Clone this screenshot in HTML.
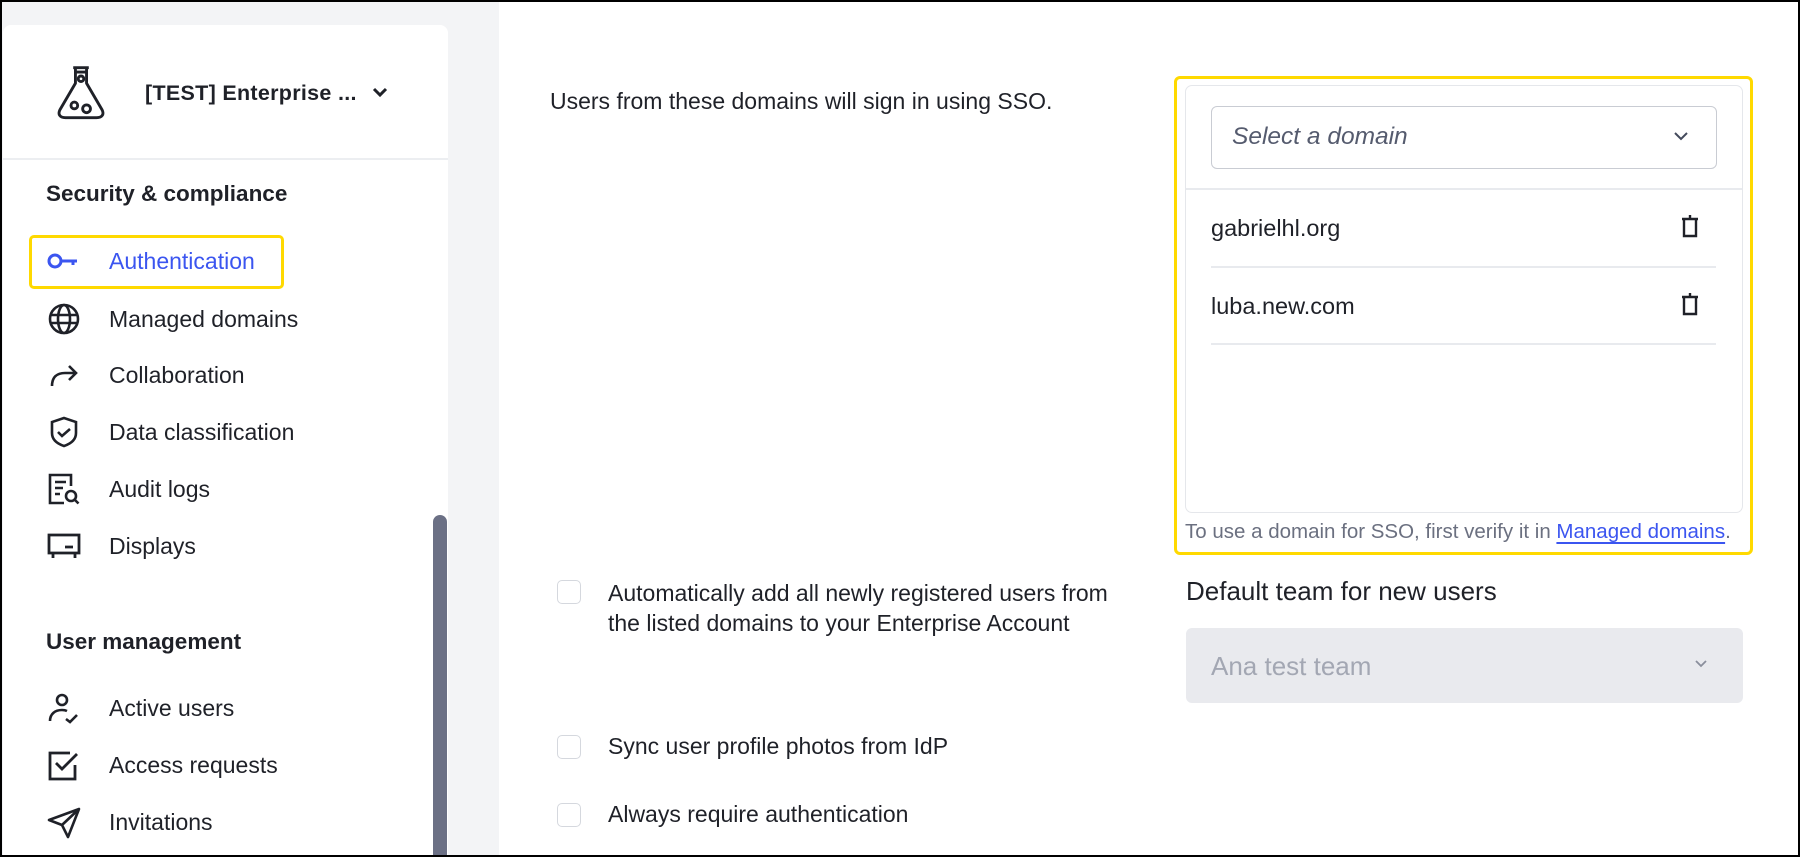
<!DOCTYPE html>
<html><head><meta charset="utf-8"><style>
*{margin:0;padding:0;box-sizing:border-box}
html,body{width:1800px;height:857px;overflow:hidden;background:#000}
#frame{position:absolute;left:2px;top:2px;width:1796px;height:853px;background:#f3f4f6;overflow:hidden;font-family:"Liberation Sans",sans-serif;color:#1f2128}
.a{position:absolute;white-space:nowrap}
#side{position:absolute;left:1px;top:23px;width:445px;height:830px;background:#fff;border-radius:8px 8px 0 0;overflow:hidden}
#main{position:absolute;left:497px;top:0;width:1299px;height:853px;background:#fff;overflow:hidden}
.item{position:absolute;left:106px;font-size:23px;line-height:26px}
.ic{position:absolute;left:44px;width:34px;height:34px}
.cb{position:absolute;left:555px;width:24px;height:24px;border:1.5px solid #d5d8de;border-radius:5px;background:#fff}
.t20{font-size:23px}
</style></head><body><div id="frame">
<div id="side">
 <svg class="a" style="left:50px;top:36px" width="56" height="60" viewBox="0 0 50 54" fill="none" stroke="#1f2128" stroke-width="2.6" stroke-linejoin="round"><path d="M18 6h14M20 6v4h10V6M20 10v10L6 44c-2 4 0 7 5 7h28c5 0 7-3 5-7L30 20V10"/><circle cx="25" cy="16" r="2.5"/><circle cx="19" cy="40" r="3"/><circle cx="30" cy="43" r="3.5"/></svg>
 <div class="a" style="left:142px;top:56px;font-size:21.5px;font-weight:bold;letter-spacing:0.3px">[TEST] Enterprise ...</div>
 <svg class="a" style="left:369px;top:61px" width="16" height="12" viewBox="0 0 16 12"><path d="M2 3l6 6 6-6" fill="none" stroke="#1f2128" stroke-width="3"/></svg>
 <div class="a" style="left:0;top:133px;width:445px;height:2px;background:#eceef1"></div>
 <div class="a" style="left:43px;top:156px;font-size:22.5px;font-weight:bold">Security &amp; compliance</div>
 <div class="a" style="left:26px;top:210px;width:255px;height:54px;border:3px solid #ffd900;border-radius:5px"></div>
 <svg class="ic" style="top:219px" viewBox="0 0 34 34" fill="none" stroke="#3b55f0" stroke-width="3"><circle cx="8" cy="17" r="6"/><path d="M14 17h16M26 17v4"/></svg>
 <div class="item" style="top:223px;color:#3b55f0">Authentication</div>
 <svg class="ic" style="top:277px" viewBox="0 0 34 34" fill="none" stroke="#1f2128" stroke-width="2.6"><circle cx="17" cy="17" r="14"/><ellipse cx="17" cy="17" rx="6" ry="14"/><path d="M3 13h28M3 21h28"/></svg>
 <div class="item" style="top:281px">Managed domains</div>
 <svg class="ic" style="top:333px" viewBox="0 0 34 34" fill="none" stroke="#1f2128" stroke-width="2.6"><path d="M5 28c0-9 5-13 13-13h11M22 8l7 7-7 7"/></svg>
 <div class="item" style="top:337px">Collaboration</div>
 <svg class="ic" style="top:390px" viewBox="0 0 34 34" fill="none" stroke="#1f2128" stroke-width="2.6"><path d="M17 3L5 7v11c0 7 6 11 12 13 6-2 12-6 12-13V7z"/><path d="M11 17l4 4 8-7"/></svg>
 <div class="item" style="top:394px">Data classification</div>
 <svg class="ic" style="top:447px" viewBox="0 0 34 34" fill="none" stroke="#1f2128" stroke-width="2.6"><path d="M24 14V3H3v28h14M8 10h11M8 16h8M8 22h5"/><circle cx="24" cy="24" r="5"/><path d="M27.5 27.5l4 4"/></svg>
 <div class="item" style="top:451px">Audit logs</div>
 <svg class="ic" style="top:504px" viewBox="0 0 34 34" fill="none" stroke="#1f2128" stroke-width="2.8"><path d="M2 6h30v18H2zM6 24v5M28 24v5M18 18h8"/></svg>
 <div class="item" style="top:508px">Displays</div>
 <div class="a" style="left:43px;top:604px;font-size:22.5px;font-weight:bold">User management</div>
 <svg class="ic" style="top:666px" viewBox="0 0 34 34" fill="none" stroke="#1f2128" stroke-width="2.6"><circle cx="15" cy="9" r="5"/><path d="M3 30c0-7 5-11 12-11 2 0 4 .5 5 1M19 28l4 3 7-7"/></svg>
 <div class="item" style="top:670px">Active users</div>
 <svg class="ic" style="top:723px" viewBox="0 0 34 34" fill="none" stroke="#1f2128" stroke-width="2.8"><path d="M28 17v14H3V5h20"/><path d="M9 15l6 6 15-15"/></svg>
 <div class="item" style="top:727px">Access requests</div>
 <svg class="ic" style="top:780px" viewBox="0 0 34 34" fill="none" stroke="#1f2128" stroke-width="2.6" stroke-linejoin="round"><path d="M2 15L32 4 21 32l-6-12z M15 20l17-16"/></svg>
 <div class="item" style="top:784px">Invitations</div>
 <div class="a" style="left:430px;top:490px;width:14px;height:400px;background:#6b7085;border-radius:7px"></div>
</div>
<div id="main">
 <div class="a t20" style="left:51px;top:86px">Users from these domains will sign in using SSO.</div>
 <div class="a" style="left:675px;top:74px;width:579px;height:479px;border:3px solid #ffd900;border-radius:6px"></div>
 <div class="a" style="left:686px;top:83px;width:558px;height:428px;border:1.5px solid #e5e7eb;border-radius:7px"></div>
 <div class="a" style="left:712px;top:104px;width:506px;height:63px;border:1.5px solid #c9ccd3;border-radius:6px"></div>
 <div class="a" style="left:733px;top:121px;font-size:24.5px;font-style:italic;color:#555b6e">Select a domain</div>
 <svg class="a" style="left:1174px;top:128px" width="16" height="12" viewBox="0 0 16 12"><path d="M2 3l6 6 6-6" fill="none" stroke="#444a5c" stroke-width="2"/></svg>
 <div class="a" style="left:687px;top:186px;width:556px;height:1.5px;background:#e8eaee"></div>
 <div class="a" style="left:712px;top:213px;font-size:23.5px">gabrielhl.org</div>
 <div class="a" style="left:712px;top:264px;width:505px;height:1.5px;background:#e8eaee"></div>
 <div class="a" style="left:712px;top:291px;font-size:23.5px">luba.new.com</div>
 <div class="a" style="left:712px;top:341px;width:505px;height:1.5px;background:#e8eaee"></div>
 <svg class="a" style="left:1182px;top:212px" width="18" height="24" viewBox="0 0 18 24" fill="none" stroke="#1f2128" stroke-width="2.4"><path d="M1 5h16M9 1v4M3 5v17h12V5"/></svg>
 <svg class="a" style="left:1182px;top:290px" width="18" height="24" viewBox="0 0 18 24" fill="none" stroke="#1f2128" stroke-width="2.4"><path d="M1 5h16M9 1v4M3 5v17h12V5"/></svg>
 <div class="a" style="left:686px;top:518px;font-size:20.5px;color:#6b7080">To use a domain for SSO, first verify it in <span style="color:#3b55f0;text-decoration:underline;text-underline-offset:4px">Managed domains</span>.</div>
 <div class="cb" style="left:58px;top:578px"></div>
 <div class="a t20" style="left:109px;top:576px;line-height:30px">Automatically add all newly registered users from<br>the listed domains to your Enterprise Account</div>
 <div class="a" style="left:687px;top:574px;font-size:26px">Default team for new users</div>
 <div class="a" style="left:687px;top:626px;width:557px;height:75px;background:#e9eaee;border-radius:6px"></div>
 <div class="a" style="left:712px;top:649px;font-size:26px;color:#a3a7b3">Ana test team</div>
 <svg class="a" style="left:1195px;top:657px" width="14" height="10" viewBox="0 0 14 10"><path d="M2 2l5 5 5-5" fill="none" stroke="#8a8f9c" stroke-width="1.8"/></svg>
 <div class="cb" style="left:58px;top:733px"></div>
 <div class="a t20" style="left:109px;top:731px">Sync user profile photos from IdP</div>
 <div class="cb" style="left:58px;top:801px"></div>
 <div class="a t20" style="left:109px;top:799px">Always require authentication</div>
</div>
</div></body></html>
